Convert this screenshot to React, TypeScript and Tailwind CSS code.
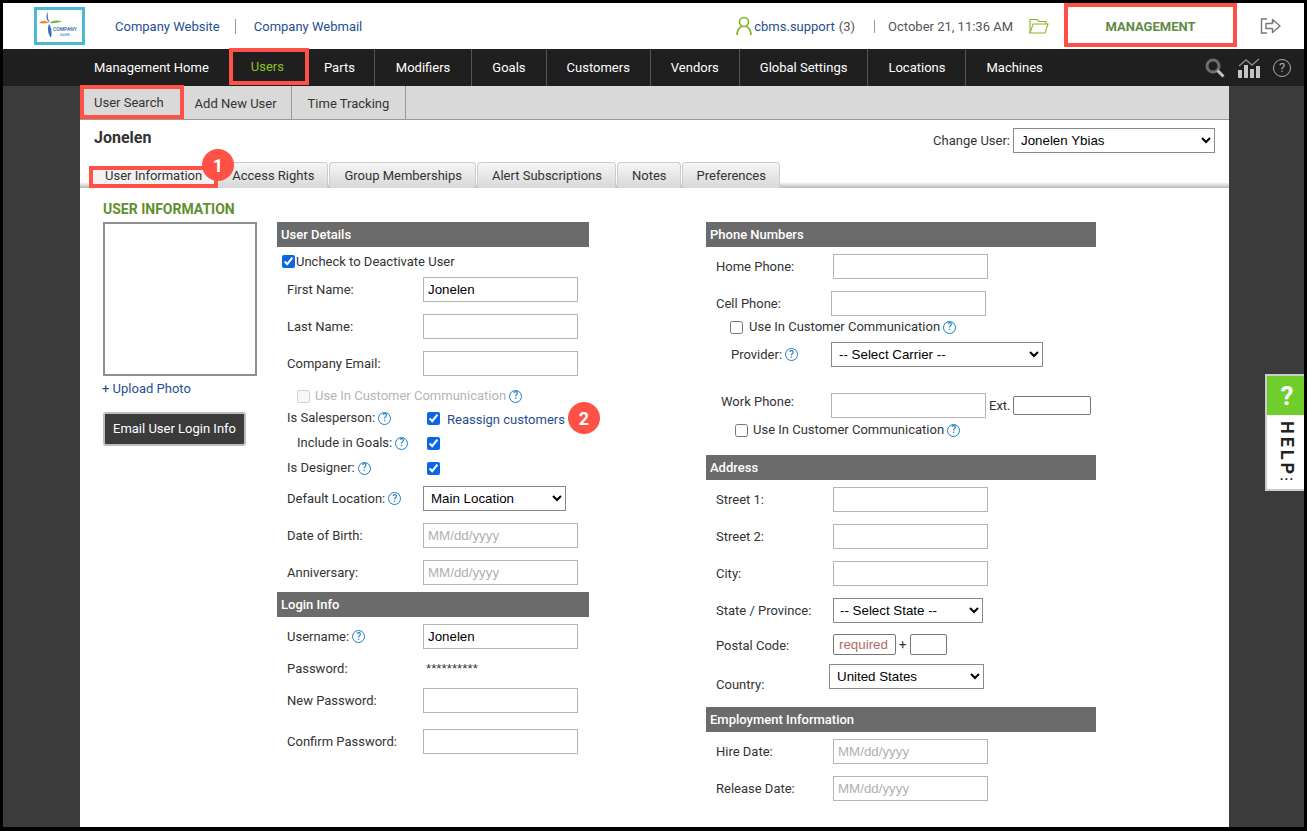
import React from 'react';

const font = 'font-["Roboto","Liberation_Sans",sans-serif]';
const field = 'font-["Liberation_Sans",Arial,sans-serif] text-[13.33px]';

const Help = () => (
  <span className="ml-[3px] inline-flex h-[13px] w-[13px] shrink-0 items-center justify-center rounded-full border border-[#1a7fc4] text-[10px] font-medium leading-none text-[#1a7fc4]">?</span>
);

const SectionHead = ({ title }: { title: string }) => (
  <div className="flex h-[25px] items-center bg-[#6b6b6b] pl-1 text-[13px] font-medium text-white">{title}</div>
);

const Text = ({ value, placeholder, className = 'w-[155px]' }: { value?: string; placeholder?: string; className?: string }) => (
  <input
    readOnly
    value={value ?? ''}
    placeholder={placeholder}
    className={`h-[25px] border border-[#b5b5b5] bg-white px-1 text-black placeholder:text-[#b0b0b0] ${field} ${className}`}
  />
);

const Drop = ({ value, className }: { value: string; className: string }) => (
  <select defaultValue={value} className={`h-[25px] border border-[#8a8a8a] bg-white px-[3px] text-black ${field} ${className}`}>
    <option>{value}</option>
  </select>
);

const Check = ({ on = true, disabled = false }: { on?: boolean; disabled?: boolean }) => (
  <input type="checkbox" readOnly checked={on} disabled={disabled} className="m-0 h-[13px] w-[13px] accent-[#0a66e4]" />
);

// label column is 146px wide in the middle form
const Row = ({ label, children, h = 'h-[25px]', mt = 'mt-3', help = false, pl = 'pl-[10px]', lw = 'w-[146px]', lc = '' }: { label: string; children?: React.ReactNode; h?: string; mt?: string; help?: boolean; pl?: string; lw?: string; lc?: string }) => (
  <div className={`flex items-center ${h} ${mt}`}>
    <div className={`flex shrink-0 items-center text-[13px] ${pl} ${lw} ${lc}`}>
      {label}
      {help && <Help />}
    </div>
    {children}
  </div>
);

const tabs = ['Access Rights', 'Group Memberships', 'Alert Subscriptions', 'Notes', 'Preferences'];

const Badge = ({ n, className }: { n: number; className: string }) => (
  <div className={`absolute z-20 flex h-8 w-8 items-center justify-center rounded-full bg-[#ff5145] text-[18px] font-bold text-white ${className}`}>{n}</div>
);

const Logo = () => (
  <div className="flex h-[38px] w-[51px] items-center justify-center border-[3px] border-[#4db7d6] bg-white">
    <svg width="45" height="32" viewBox="0 0 45 32">
      <path d="M11 2c-1 4 0 8 2 11-3-2-5-7-2-11z" fill="#3f51a8" />
      <path d="M2 13c3-3 7-3 10 0-3 0-6 1-10 0z" fill="#f08a2c" />
      <path d="M13 13c3-3 8-3 12-1-4 0-8 2-12 1z" fill="#6fbb44" />
      <path d="M12 14c3 4 3 9 2 14-3-4-4-9-2-14z" fill="#3f6ec9" />
      <text x="16" y="21" fontSize="5" fontWeight="700" fill="#4a7ab8">COMPANY</text>
      <text x="23" y="26" fontSize="3.5" fill="#4a7ab8">NAME</text>
    </svg>
  </div>
);

const UserIcon = () => (
  <svg width="16" height="20" viewBox="0 0 16 20" fill="none" stroke="#7ab51d" strokeWidth="1.6">
    <circle cx="8" cy="6" r="4.5" />
    <path d="M1 19c0-4.5 2.5-8 4.5-8.5M15 19c0-4.5-2.5-8-4.5-8.5" />
  </svg>
);

const FolderIcon = () => (
  <svg width="20" height="18" viewBox="0 0 20 18" fill="none" stroke="#8db32b" strokeWidth="1.1">
    <path d="M1 16V2.5h7l2 2h7V7" />
    <path d="M1 16l3-9h15l-3 9z" />
  </svg>
);

const ExitIcon = () => (
  <svg width="21" height="18" viewBox="0 0 21 18" fill="none" stroke="#777" strokeWidth="1.4">
    <path d="M7 2H1.5v14H7" />
    <path d="M6 6.5h6.5V2.5L20 9l-7.5 6.5v-4H6z" strokeLinejoin="round" />
  </svg>
);

const SearchIcon = () => (
  <svg width="20" height="20" viewBox="0 0 20 20" fill="none">
    <circle cx="8" cy="8" r="6" stroke="#6e6e6e" strokeWidth="3" />
    <path d="M12.5 12.5l6 6" stroke="#c4c4c4" strokeWidth="3" />
  </svg>
);

const BarsIcon = () => (
  <svg width="22" height="20" viewBox="0 0 22 20" fill="#c4c4c4">
    <rect x="0" y="12" width="4" height="8" />
    <rect x="6" y="7" width="4" height="13" />
    <rect x="12" y="11" width="4" height="9" />
    <rect x="18" y="8" width="4" height="12" />
    <path d="M1 8l7-6 6 5 7-6" fill="none" stroke="#8a8a8a" strokeWidth="1.5" />
  </svg>
);

const HelpCircle = () => (
  <div className="flex h-[18px] w-[18px] items-center justify-center rounded-full border border-[#aaa] text-[13px] leading-none text-[#aaa]">?</div>
);

const NavItem = ({ label, className = 'px-5' }: { label: string; className?: string }) => (
  <div className={`flex items-center border-r border-[#555] ${className}`}>{label}</div>
);

export default function App() {
  return (
    <div className={`relative flex h-[831px] w-[1307px] flex-col overflow-hidden border-[3px] border-b-[4px] border-black bg-[#3b3b3b] text-[#333] ${font}`}>
      <header className="flex h-[46px] shrink-0 items-center bg-white text-[13px]">
        <div className="ml-[31px]"><Logo /></div>
        <a className="ml-[30px] mt-[2px] text-[#1f4f8f]">Company Website</a>
        <span className="ml-[15px] mr-[18px] h-[15px] w-px bg-[#999]" />
        <a className="mt-[2px] text-[#1f4f8f]">Company Webmail</a>
        <div className="ml-auto flex h-full items-center">
          <UserIcon />
          <span className="ml-[2px] mt-[2px] text-[#1f4f8f]">cbms.support</span>
          <span className="ml-1 mt-[2px] text-[#555]">(3)</span>
          <span className="ml-[19px] mr-[13px] h-[13px] w-px bg-[#999]" />
          <span className="mt-[2px] text-[#555]">October 21, 11:36 AM</span>
          <div className="ml-4"><FolderIcon /></div>
          <div className="ml-[15px] flex h-[44px] w-[173px] items-center justify-center self-start border-[4px] border-[#ff5145] pt-[3px] text-[13px] font-bold text-[#5f8a45]">MANAGEMENT</div>
          <div className="ml-[23px] mr-[23px]"><ExitIcon /></div>
        </div>
      </header>

      <nav className="flex h-[37px] shrink-0 items-stretch bg-[#1f1f1f] pl-[77px] text-[13px] text-white">
        <div className="flex items-center pl-[14px] pr-[20px]">Management Home</div>
        <div className="z-10 flex -translate-y-px items-center border-[4px] border-[#ff5145] pl-[18px] pr-[21px] text-[#8dc21f]">Users</div>
        <NavItem label="Parts" className="pl-[15px] pr-[19px]" />
        <NavItem label="Modifiers" className="px-[21px]" />
        <NavItem label="Goals" />
        <NavItem label="Customers" />
        <NavItem label="Vendors" />
        <NavItem label="Global Settings" />
        <NavItem label="Locations" />
        <div className="flex items-center px-5">Machines</div>
        <div className="ml-auto mr-[13px] flex items-center gap-[13px]">
          <SearchIcon />
          <BarsIcon />
          <HelpCircle />
        </div>
      </nav>

      <div className="ml-[77px] flex w-[1149px] min-h-0 flex-1 flex-col bg-white">
        <div className="flex h-[34px] shrink-0 items-stretch border-b border-[#999] bg-[#d9d9d9] text-[13px]">
          <div className="z-10 flex h-[34px] -translate-y-px items-center border-[4px] border-[#ff5145] pl-[10px] pr-[16px] pt-[2px]">User Search</div>
          <div className="flex items-center border-r border-[#999] pl-[11px] pr-[14px] pt-[2px]">Add New User</div>
          <div className="flex items-center border-r border-[#999] px-[16px] pt-[2px]">Time Tracking</div>
        </div>

        <div className="flex h-[68px] shrink-0 flex-col">
          <div className="flex h-[41px] items-start justify-between pl-[14px] pr-[14px]">
            <h1 className="mt-[6px] text-[16px] font-bold">Jonelen</h1>
            <div className="mt-[8px] flex items-center text-[13px]">
              <span className="mr-[3px]">Change User:</span>
              <Drop value="Jonelen Ybias" className="w-[202px]" />
            </div>
          </div>
          <div className="relative flex h-[27px] items-end gap-px bg-[linear-gradient(#fff_calc(100%-6px),#b8b8b8)] pl-[9px] text-[13px]">
            <div className="z-10 -mr-[2px] flex h-[22px] items-center border-[4px] border-[#ff5145] bg-[#f1f1f1] px-[12px] pb-[3px]">User Information</div>
            {tabs.map(t => (
              <div key={t} className="flex h-[26px] items-center rounded-t-sm border border-b-0 border-[#ccc] bg-gradient-to-b from-[#f6f6f6] to-[#d8d8d8] pl-[14px] pr-[13px] pt-px">
                {t}
              </div>
            ))}
            <Badge n={1} className="left-[122px] top-[-12px]" />
          </div>
        </div>

        <div className="flex min-h-0 flex-1 pl-[23px]">
          <div className="w-[174px] shrink-0">
            <div className="mt-[13px] text-[14px] font-bold leading-4 text-[#5f8f2f]">USER INFORMATION</div>
            <div className="mt-[5px] h-[154px] w-[154px] border-2 border-[#8f8f8f]" />
            <div className="-ml-px mt-[3px] text-[13px] text-[#1f4f8f]">+ Upload Photo</div>
            <button className="mt-[13px] h-[34px] w-[143px] rounded-[3px] border-2 border-[#bdbdbd] bg-[#3b3b3b] text-[13px] text-white">Email User Login Info</button>
          </div>

          <div className="mt-[34px] w-[312px] shrink-0">
            <SectionHead title="User Details" />
            <div className="mt-[7px] flex h-[15px] items-center pl-[5px] text-[13px]"><Check /><span className="ml-px">Uncheck to Deactivate User</span></div>
            <Row label="First Name:" mt="mt-[8px]"><Text value="Jonelen" /></Row>
            <Row label="Last Name:"><Text /></Row>
            <Row label="Company Email:"><Text /></Row>
            <div className="mt-[12px] flex h-[16px] items-center pl-[20px] text-[13px] text-[#b5b5b5]"><Check on={false} disabled /><span className="ml-[5px]">Use In Customer Communication</span><Help /></div>
            <div className="relative">
              <Row label="Is Salesperson:" help h="h-[16px]" mt="mt-[6px]" lw="w-[150px]">
                <Check />
                <span className="ml-[7px] mt-[3px] text-[13px] text-[#1f4f8f]">Reassign customers</span>
              </Row>
              <Badge n={2} className="left-[291px] top-[-8px]" />
            </div>
            <Row label="Include in Goals:" help h="h-[16px]" mt="mt-[9px]" pl="pl-[20px]" lw="w-[150px]"><Check /></Row>
            <Row label="Is Designer:" help h="h-[16px]" mt="mt-[9px]" lw="w-[150px]"><Check /></Row>
            <Row label="Default Location:" help mt="mt-[10px]"><Drop value="Main Location" className="w-[143px]" /></Row>
            <Row label="Date of Birth:"><Text placeholder="MM/dd/yyyy" /></Row>
            <Row label="Anniversary:"><Text placeholder="MM/dd/yyyy" /></Row>
            <div className="mt-[7px]"><SectionHead title="Login Info" /></div>
            <Row label="Username:" help mt="mt-[7px]"><Text value="Jonelen" /></Row>
            <Row label="Password:" h="h-[16px]" mt="mt-[12px]"><span className={`ml-[3px] ${field}`}>**********</span></Row>
            <Row label="New Password:" mt="mt-[11px]"><Text /></Row>
            <Row label="Confirm Password:" mt="mt-4"><Text /></Row>
          </div>

          <div className="ml-[117px] mt-[34px] w-[390px] shrink-0">
            <SectionHead title="Phone Numbers" />
            <Row label="Home Phone:" mt="mt-[7px]" lw="w-[127px]"><Text /></Row>
            <Row label="Cell Phone:" lw="w-[125px]"><Text /></Row>
            <div className="mt-[3px] flex h-[16px] items-center pl-[24px] text-[13px]"><Check on={false} /><span className="ml-[6px]">Use In Customer Communication</span><Help /></div>
            <Row label="Provider:" help mt="mt-[7px]" pl="pl-[25px]" lw="w-[125px]"><Drop value="-- Select Carrier --" className="w-[212px]" /></Row>
            <Row label="Work Phone:" mt="mt-[26px]" pl="pl-[15px]" lw="w-[125px]" lc="-translate-y-1">
              <Text />
              <span className="ml-[3px] mr-[2px] text-[13px]">Ext.</span>
              <input readOnly className="h-[19px] w-[78px] rounded-[2px] border border-[#777]" />
            </Row>
            <div className="mt-[4px] flex h-[16px] items-center pl-[29px] text-[13px]"><Check on={false} /><span className="ml-[5px]">Use In Customer Communication</span><Help /></div>
            <div className="mt-[17px]"><SectionHead title="Address" /></div>
            <Row label="Street 1:" mt="mt-[7px]" lw="w-[127px]"><Text /></Row>
            <Row label="Street 2:" lw="w-[127px]"><Text /></Row>
            <Row label="City:" lw="w-[127px]"><Text /></Row>
            <Row label="State / Province:" lw="w-[127px]"><Drop value="-- Select State --" className="w-[150px] pl-[2px]" /></Row>
            <Row label="Postal Code:" h="h-[21px]" mt="mt-[11px]" lw="w-[127px]" lc="translate-y-px">
              <input readOnly placeholder="required" className={`h-[21px] w-[63px] rounded-[2px] border border-[#777] px-[5px] placeholder:text-[#b26a6a] ${field}`} />
              <span className="ml-[3px] mr-[4px] text-[13px]">+</span>
              <input readOnly className="h-[21px] w-[37px] rounded-[2px] border border-[#777]" />
            </Row>
            <Row label="Country:" mt="mt-[9px]" lw="w-[123px]" lc="translate-y-2"><Drop value="United States" className="w-[155px]" /></Row>
            <div className="mt-[18px]"><SectionHead title="Employment Information" /></div>
            <Row label="Hire Date:" mt="mt-[7px]" lw="w-[127px]"><Text placeholder="MM/dd/yyyy" /></Row>
            <Row label="Release Date:" lw="w-[127px]"><Text placeholder="MM/dd/yyyy" /></Row>
          </div>
        </div>
      </div>

      <div className="absolute right-[-3px] top-[371px] z-30 flex h-[117px] w-[42px] flex-col border-2 border-r-0 border-[#ccc] bg-white">
        <div className="flex h-[39px] items-center justify-center bg-[#6fce2b] text-[26px] font-bold leading-none text-white">?</div>
        <div className="flex flex-1 flex-col items-center pt-[6px] text-[#222]">
          <span className="text-[18px] font-bold leading-none tracking-[3px] [writing-mode:vertical-rl]">HELP</span>
          <span className="-mt-[8px] text-[13px] font-bold leading-none tracking-[1px]">...</span>
        </div>
      </div>
    </div>
  );
}
